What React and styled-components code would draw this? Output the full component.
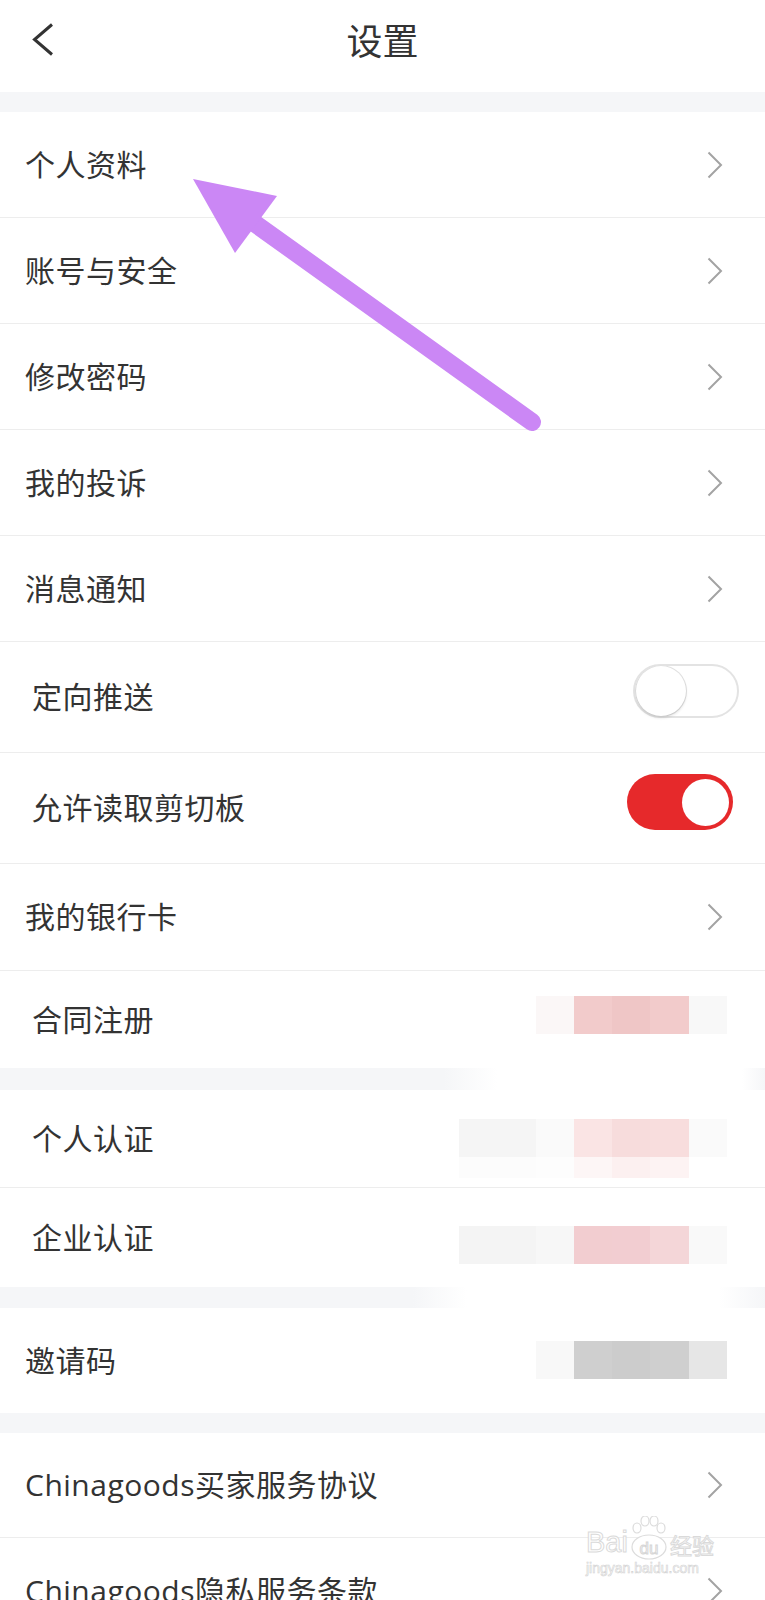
import React from 'react'
import styled, { createGlobalStyle } from 'styled-components'

const GlobalStyle = createGlobalStyle`
	* { box-sizing: border-box; }
	html, body {
		margin: 0;
		padding: 0;
		background: #fff;
	}
	body {
		font-family: "Open Sans", "Noto Sans CJK SC", sans-serif;
		color: #333;
	}
`;

const groups = [
	[
		{ label: '个人资料', h: 106 },
		{ label: '账号与安全', h: 106 },
		{ label: '修改密码', h: 106 },
		{ label: '我的投诉', h: 106 },
		{ label: '消息通知', h: 106 },
		{ label: '定向推送', h: 111, inset: true, toggle: 'off' },
		{ label: '允许读取剪切板', h: 111, inset: true, toggle: 'on' },
		{ label: '我的银行卡', h: 107 },
		{
			label: '合同注册', h: 97, inset: true, shift: -5,
			blob: [['#fbf7f7', '#f2cbcb', '#efc6c6', '#f2cbcb', '#f8f8f8']],
		},
	],
	[
		{
			label: '个人认证', h: 98, inset: true, shift: 10,
			blob: [
				['#f5f5f5', '#f5f5f5', '#fafafa', '#fae4e4', '#f7dcdc', '#f8dddd', '#fafafa'],
				['#fcfcfc', '#fcfcfc', '#fdfdfd', '#fdf6f6', '#fcf0f0', '#fdf3f3', '#ffffff'],
			],
		},
		{
			label: '企业认证', h: 99, inset: true, shift: 7,
			blob: [['#f4f4f4', '#f4f4f4', '#f7f7f7', '#f2cdd0', '#f2cdd1', '#f4d6d8', '#f9f9f9']],
		},
	],
	[
		{
			label: '邀请码', h: 105, shift: -1,
			blob: [['#f8f8f8', '#cfcfcf', '#cccccc', '#cfcfcf', '#e6e6e6']],
		},
	],
	[
		{ label: 'Chinagoods买家服务协议', h: 105 },
		{ label: 'Chinagoods隐私服务条款', h: 105 },
	],
];

const bands = [
	{ h: 20 },
	{ h: 22, smudge: 'linear-gradient(to right, #f5f6f8 0%, #f5f6f8 58%, #fff 65%, #fff 97%, #f5f6f8 100%)' },
	{ h: 21, smudge: 'linear-gradient(to right, #f5f6f8 0%, #f5f6f8 54%, #fff 61%, #fff 94%, #f5f6f8 100%)' },
	{ h: 20 },
];

const Chevron = () => (
	<svg width="16" height="28" viewBox="0 0 16 28">
		<polyline points="1.5,1.5 14,14 1.5,26.5" fill="none" stroke="#a3a3a3" strokeWidth="2" />
	</svg>
);

const Settings = () => {
	return (
		<Page>
			<GlobalStyle />
			<Header>
				<Back>
					<svg width="22" height="33" viewBox="0 0 22 33">
						<polyline points="20,1.5 2.5,16.5 20,31.5" fill="none" stroke="#333" strokeWidth="3" />
					</svg>
				</Back>
				<Title>设置</Title>
				<span />
			</Header>

			{groups.map((rows, gi) => (
				<React.Fragment key={gi}>
					<Band $h={bands[gi].h} $bg={bands[gi].smudge} />
					<Group>
						{rows.map((row) => (
							<Row key={row.label} $h={row.h}>
								<Label $inset={row.inset}>{row.label}</Label>
								{row.toggle && (
									<Toggle $on={row.toggle === 'on'}>
										<Knob $on={row.toggle === 'on'} />
									</Toggle>
								)}
								{row.blob && (
									<Blob $shift={row.shift}>
										{row.blob.map((cells, ri) => (
											<BlobLine key={ri} $thin={ri > 0}>
												{cells.map((c, ci) => (
													<Cell key={ci} style={{ background: c }} />
												))}
											</BlobLine>
										))}
									</Blob>
								)}
								{!row.toggle && !row.blob && (
									<Arrow><Chevron /></Arrow>
								)}
							</Row>
						))}
					</Group>
				</React.Fragment>
			))}

			<Pointer width="765" height="1600" viewBox="0 0 765 1600">
				<line x1="250" y1="220" x2="532" y2="422" stroke="#cb87f5" strokeWidth="18" strokeLinecap="round" />
				<polygon points="193,179 277,196 235,253" fill="#cb87f5" />
			</Pointer>

			<Watermark>
				<Brand>
					<span>Bai</span>
					<Paw>
						<svg width="40" height="44" viewBox="0 0 40 44">
							<g fill="#fff" stroke="#dcdcdc" strokeWidth="1.2">
								<ellipse cx="9" cy="12" rx="4" ry="5" />
								<ellipse cx="17" cy="5" rx="4" ry="5" />
								<ellipse cx="26" cy="5" rx="4" ry="5" />
								<ellipse cx="33" cy="12" rx="4" ry="5" />
								<ellipse cx="21" cy="31" rx="17" ry="12" />
							</g>
							<text x="21" y="38" textAnchor="middle" fontSize="17" fill="#fff" stroke="#d6d6d6" strokeWidth="1" fontFamily="Liberation Sans, sans-serif">du</text>
						</svg>
					</Paw>
					<span>经验</span>
				</Brand>
				<Site>jingyan.baidu.com</Site>
			</Watermark>
		</Page>
	)
}

const Page = styled.div`
	position: relative;
	width: 765px;
	min-height: 1600px;
	overflow: hidden;
	background: #fff;
`;

const Header = styled.div`
	height: 92px;
	display: grid;
	grid-template-columns: 1fr auto 1fr;
	align-items: start;
	padding-top: 20px;
`;

const Back = styled.div`
	padding-left: 32px;
	padding-top: 3px;
	line-height: 0;
`;

const Title = styled.div`
	font-family: "Noto Sans CJK SC", sans-serif;
	font-size: 36px;
	font-weight: 400;
	line-height: 38px;
	color: #333;
`;

const Band = styled.div`
	height: ${p => p.$h}px;
	background: ${p => p.$bg || '#f5f6f8'};
`;

const Group = styled.div`
	background: #fff;
`;

const Row = styled.div`
	height: ${p => p.$h}px;
	display: flex;
	align-items: center;
	justify-content: space-between;
	border-bottom: 1px solid #ededed;
	&:last-child {
		border-bottom: none;
	}
`;

const Label = styled.div`
	padding-left: ${p => (p.$inset ? 32 : 25)}px;
	font-size: 30px;
	letter-spacing: 0.5px;
	line-height: 36px;
	color: #333;
	white-space: nowrap;
`;

const Arrow = styled.div`
	padding-right: 42px;
	line-height: 0;
`;

const Toggle = styled.div`
	display: flex;
	align-items: center;
	justify-content: ${p => (p.$on ? 'flex-end' : 'flex-start')};
	width: 106px;
	height: ${p => (p.$on ? 56 : 54)}px;
	margin-right: ${p => (p.$on ? 32 : 26)}px;
	margin-bottom: 12px;
	padding: ${p => (p.$on ? '0 4px' : '0 1px')};
	border-radius: 28px;
	background: ${p => (p.$on ? '#e6292b' : '#fff')};
	border: ${p => (p.$on ? 'none' : '2px solid #e3e3e3')};
`;

const Knob = styled.div`
	width: ${p => (p.$on ? 47 : 50)}px;
	height: ${p => (p.$on ? 47 : 50)}px;
	border-radius: 50%;
	background: #fff;
	box-shadow: ${p => (p.$on ? 'none' : '0 2px 3px rgba(0,0,0,0.12), 0 0 0 1px #e2e2e2')};
`;

const Blob = styled.div`
	display: flex;
	flex-direction: column;
	margin-right: 38px;
	margin-top: ${p => (p.$shift || 0) * 2}px;
`;

const BlobLine = styled.div`
	display: flex;
	height: ${p => (p.$thin ? 21 : 38)}px;
`;

const Cell = styled.div`
	width: 38.3px;
	height: 100%;
`;

const Pointer = styled.svg`
	position: absolute;
	left: 0;
	top: 0;
	pointer-events: none;
`;

const Watermark = styled.div`
	position: absolute;
	left: 586px;
	top: 1516px;
	display: flex;
	flex-direction: column;
	align-items: flex-start;
	pointer-events: none;
`;

const Brand = styled.div`
	display: flex;
	align-items: flex-end;
	font-family: "Liberation Sans", sans-serif;
	font-size: 29px;
	line-height: 30px;
	color: #fff;
	-webkit-text-stroke: 1px #dadada;
	span:last-child {
		font-family: "Noto Sans CJK SC", sans-serif;
		font-size: 22px;
		line-height: 26px;
		margin-left: 2px;
	}
`;

const Paw = styled.div`
	line-height: 0;
	margin-bottom: -3px;
`;

const Site = styled.div`
	font-family: "Liberation Sans", sans-serif;
	font-size: 14px;
	line-height: 16px;
	color: #fff;
	-webkit-text-stroke: 0.6px #d2d2d2;
	margin-top: 3px;
`;

export default Settings
